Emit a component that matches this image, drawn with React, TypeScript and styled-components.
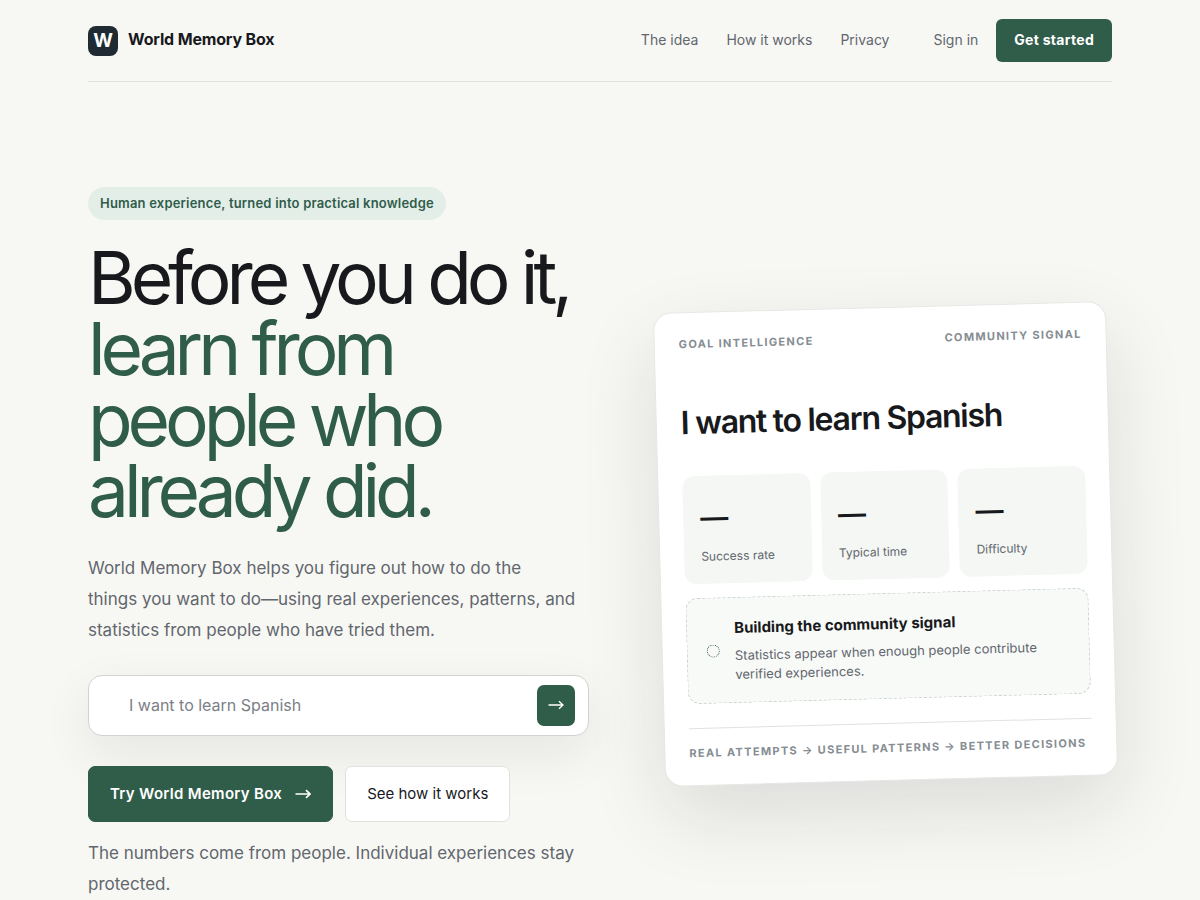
import React from "react";
import styled, { createGlobalStyle } from "styled-components";

const color = {
  page: "#f7f8f4",
  ink: "#18191c",
  muted: "#62666d",
  faint: "#868d93",
  green: "#305c4a",
  mint: "#e4eee9",
  line: "#dfe2de",
  white: "#ffffff",
};

const GlobalStyle = createGlobalStyle`
  *, *::before, *::after { box-sizing: border-box; }
  body {
    margin: 0;
    background: ${color.page};
    color: ${color.ink};
    font-family: Inter, "Liberation Sans", sans-serif;
    font-size: 16px;
  }
  h1, h2, h3, p { margin: 0; }
  a { color: inherit; text-decoration: none; }
  button, input { font: inherit; }
`;

const Page = styled.div`
  max-width: 1356px;
  margin: 0 auto;
  padding: 0 88px;
`;

const Header = styled.header`
  display: flex;
  align-items: center;
  justify-content: space-between;
  padding: 19px 0;
  border-bottom: 1px solid ${color.line};
`;

const Brand = styled.a`
  display: flex;
  align-items: center;
  gap: 10px;
  font-weight: 700;
  letter-spacing: -0.01em;
`;

const BrandMark = styled.span`
  display: grid;
  place-items: center;
  width: 30px;
  height: 30px;
  border-radius: 8px;
  background: #1f2a33;
  color: ${color.white};
  font-size: 19px;
  line-height: 30px;
`;

const BrandName = styled.span`
  padding-bottom: 3px;
`;

const Nav = styled.nav`
  display: flex;
  align-items: baseline;
  gap: 28px;
  color: ${color.muted};
  font-size: 14px;
`;

const Account = styled.div`
  display: flex;
  align-items: baseline;
  gap: 18px;
  margin-left: 16px;
`;

const StartLink = styled.a`
  padding: 10px 18px 12px;
  border-radius: 6px;
  background: ${color.green};
  color: ${color.white};
  font-weight: 700;
  line-height: 21px;
  letter-spacing: 0.02em;
`;

const Hero = styled.main`
  display: grid;
  grid-template-columns: minmax(0, 1.05fr) minmax(0, 0.95fr);
  align-items: center;
  gap: 70px;
  padding: 105px 0;
`;

const Intro = styled.section`
  display: flex;
  flex-direction: column;
  align-items: stretch;
`;

const Pill = styled.p`
  align-self: flex-start;
  padding: 7px 12px;
  border-radius: 17px;
  background: ${color.mint};
  color: ${color.green};
  font-size: 13px;
  font-weight: 600;
  line-height: 19px;
  letter-spacing: 0.015em;
`;

const Headline = styled.h1`
  margin-top: 22px;
  font-size: 73px;
  font-weight: 400;
  line-height: 71px;
  letter-spacing: -0.07em;

  em {
    display: block;
    max-width: 400px;
    color: ${color.green};
    font-style: normal;
  }
`;

const Copy = styled.p<{ $gap: number }>`
  margin-top: ${(p) => p.$gap}px;
  color: ${color.muted};
  font-size: 17px;
  line-height: 31px;
`;

const GoalForm = styled.form`
  display: flex;
  align-items: center;
  margin-top: 29px;
  padding: 9px 13px 9px 40px;
  border: 1px solid #cfd3d2;
  border-radius: 14px;
  background: ${color.white};
  box-shadow: 0 18px 50px rgba(24, 25, 28, 0.08);
`;

const GoalInput = styled.input`
  flex: 1;
  min-width: 0;
  padding: 0 0 2px;
  border: 0;
  outline: 0;
  background: transparent;
  color: ${color.ink};

  &::placeholder { color: #7b8087; opacity: 1; }
`;

const GoalSubmit = styled.button`
  display: grid;
  place-items: center;
  width: 38px;
  height: 41px;
  padding: 0 0 2px;
  border: 0;
  border-radius: 7px;
  background: ${color.green};
  color: ${color.white};
`;

const Actions = styled.div`
  display: flex;
  gap: 12px;
  margin-top: 30px;
`;

const ActionLink = styled.a<{ $primary?: boolean }>`
  display: flex;
  align-items: center;
  gap: 13px;
  padding: 16px 21px;
  border: 1px solid ${(p) => (p.$primary ? color.green : color.line)};
  border-radius: 7px;
  background: ${(p) => (p.$primary ? color.green : color.white)};
  color: ${(p) => (p.$primary ? color.white : color.ink)};
  font-size: 15px;
  font-weight: ${(p) => (p.$primary ? 600 : 400)};
  line-height: 22px;
  letter-spacing: ${(p) => (p.$primary ? "0.02em" : "normal")};
`;

const GoalCard = styled.article`
  padding: 24px;
  border: 1px solid #e6e8e5;
  border-radius: 18px;
  background: ${color.white};
  box-shadow: 0 30px 80px rgba(24, 25, 28, 0.12);
  transform: rotate(-1.5deg);
`;

const CardLabels = styled.div`
  display: flex;
  justify-content: space-between;
  color: ${color.faint};
  font-size: 11px;
  font-weight: 700;
  line-height: 15px;
  letter-spacing: 0.12em;
  text-transform: uppercase;
`;

const GoalTitle = styled.h2`
  margin: 53px 0 36px;
  font-size: 32px;
  font-weight: 600;
  line-height: 35px;
  letter-spacing: -0.04em;
`;

const Stats = styled.dl`
  display: grid;
  grid-template-columns: repeat(3, minmax(0, 1fr));
  gap: 10px;
  margin: 0;
`;

const Stat = styled.div`
  display: flex;
  flex-direction: column-reverse;
  gap: 4px;
  padding: 18px 17px;
  border-radius: 12px;
  background: #f4f7f4;

  dt {
    color: ${color.muted};
    font-size: 12px;
    line-height: 19px;
  }
  dd {
    margin: 0;
    font-size: 28px;
    font-weight: 600;
    line-height: 49px;
  }
`;

const Notice = styled.section`
  display: flex;
  align-items: center;
  gap: 15px;
  margin-top: 14px;
  padding: 18px 19px;
  border: 1px dashed #cdd4cf;
  border-radius: 12px;
  background: #f8faf8;

  h3 {
    font-size: 15px;
    font-weight: 700;
    line-height: 24px;
  }
  p {
    margin-top: 6px;
    color: ${color.muted};
    font-size: 13px;
    line-height: 19px;
  }
`;

const Ring = styled.span`
  flex: none;
  width: 13px;
  height: 13px;
  border: 1px dotted ${color.green};
  border-radius: 50%;
`;

const CardFooter = styled.footer`
  margin-top: 24px;
  padding-top: 17px;
  border-top: 1px solid ${color.line};
  color: ${color.faint};
  font-size: 11px;
  font-weight: 700;
  line-height: 15px;
  letter-spacing: 0.12em;
  text-transform: uppercase;
  white-space: nowrap;
`;

const ArrowDrawing = styled.svg`
  display: block;
  width: 16px;
  height: 12px;
  fill: none;
  stroke: currentColor;
`;

function Arrow({ weight }: { weight: number }) {
  return (
    <ArrowDrawing viewBox="0 0 16 12" strokeWidth={weight} aria-hidden="true">
      <path d="M0.5 6H15M11 2.2 15 6l-4 3.8" />
    </ArrowDrawing>
  );
}

const stats = ["Success rate", "Typical time", "Difficulty"];

export default function App() {
  return (
    <>
      <GlobalStyle />
      <Page>
        <Header>
          <Brand href="#">
            <BrandMark>W</BrandMark>
            <BrandName>World Memory Box</BrandName>
          </Brand>
          <Nav>
            <a href="#idea">The idea</a>
            <a href="#how">How it works</a>
            <a href="#privacy">Privacy</a>
            <Account>
              <a href="#signin">Sign in</a>
              <StartLink href="#start">Get started</StartLink>
            </Account>
          </Nav>
        </Header>

        <Hero>
          <Intro>
            <Pill>Human experience, turned into practical knowledge</Pill>
            <Headline>
              Before you do it, <em>learn from people who already did.</em>
            </Headline>
            <Copy $gap={27}>
              World Memory Box helps you figure out how to do the
              <br />
              things you want to do—using real experiences, patterns, and
              <br />
              statistics from people who have tried them.
            </Copy>
            <GoalForm onSubmit={(e) => e.preventDefault()}>
              <GoalInput type="text" aria-label="Your goal" placeholder="I want to learn Spanish" />
              <GoalSubmit type="submit" aria-label="Search goal">
                <Arrow weight={1.3} />
              </GoalSubmit>
            </GoalForm>
            <Actions>
              <ActionLink href="#try" $primary>
                Try World Memory Box <Arrow weight={1.7} />
              </ActionLink>
              <ActionLink href="#how">See how it works</ActionLink>
            </Actions>
            <Copy $gap={16}>
              The numbers come from people. Individual experiences stay
              <br />
              protected.
            </Copy>
          </Intro>

          <GoalCard>
            <CardLabels>
              <span>Goal intelligence</span>
              <span>Community signal</span>
            </CardLabels>
            <GoalTitle>I want to learn Spanish</GoalTitle>
            <Stats>
              {stats.map((label) => (
                <Stat key={label}>
                  <dt>{label}</dt>
                  <dd>—</dd>
                </Stat>
              ))}
            </Stats>
            <Notice>
              <Ring aria-hidden="true" />
              <div>
                <h3>Building the community signal</h3>
                <p>Statistics appear when enough people contribute verified experiences.</p>
              </div>
            </Notice>
            <CardFooter>Real attempts → Useful patterns → Better decisions</CardFooter>
          </GoalCard>
        </Hero>
      </Page>
    </>
  );
}
